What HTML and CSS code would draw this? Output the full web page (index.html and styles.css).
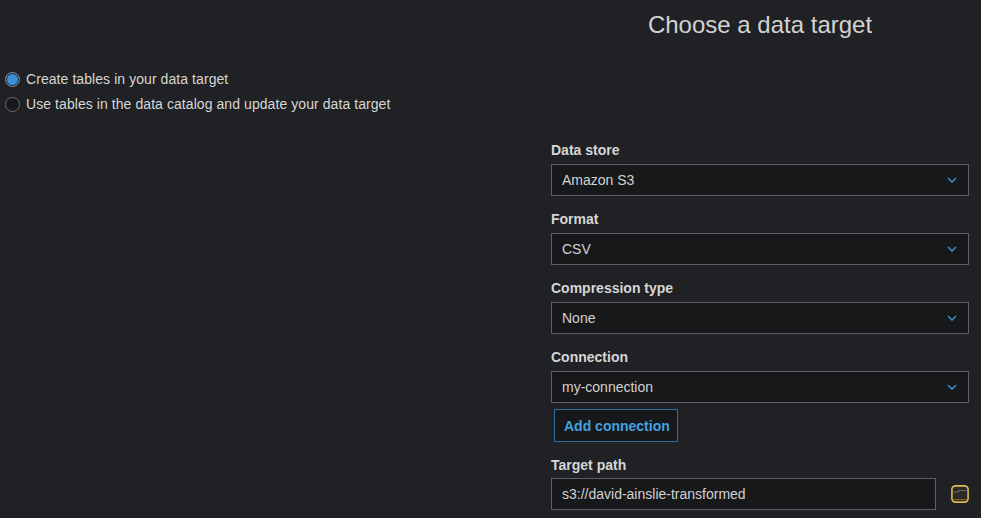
FILE: index.html
```html
<!DOCTYPE html>
<html>
<head>
<meta charset="utf-8">
<link rel="stylesheet" href="styles.css">
</head>
<body>
<div class="page">
  <div class="left">
    <label class="radio"><span class="dot checked"></span>Create tables in your data target</label>
    <label class="radio"><span class="dot"></span>Use tables in the data catalog and update your data target</label>
  </div>
  <div class="right">
    <h1 class="title">Choose a data target</h1>
    <div class="form">
      <div class="field">
        <div class="label">Data store</div>
        <div class="select"><span>Amazon S3</span><svg class="chev" width="10" height="6" viewBox="0 0 10 6"><path d="M1 1 L5 5 L9 1" fill="none" stroke="#3f8bc6" stroke-width="1.6"/></svg></div>
      </div>
      <div class="field">
        <div class="label">Format</div>
        <div class="select"><span>CSV</span><svg class="chev" width="10" height="6" viewBox="0 0 10 6"><path d="M1 1 L5 5 L9 1" fill="none" stroke="#3f8bc6" stroke-width="1.6"/></svg></div>
      </div>
      <div class="field">
        <div class="label">Compression type</div>
        <div class="select"><span>None</span><svg class="chev" width="10" height="6" viewBox="0 0 10 6"><path d="M1 1 L5 5 L9 1" fill="none" stroke="#3f8bc6" stroke-width="1.6"/></svg></div>
      </div>
      <div class="field field-conn">
        <div class="label">Connection</div>
        <div class="select"><span>my-connection</span><svg class="chev" width="10" height="6" viewBox="0 0 10 6"><path d="M1 1 L5 5 L9 1" fill="none" stroke="#3f8bc6" stroke-width="1.6"/></svg></div>
        <button class="btn">Add connection</button>
      </div>
      <div class="field">
        <div class="label label-tight">Target path</div>
        <div class="path-row">
          <div class="input">s3://david-ainslie-transformed</div>
          <svg class="folder" width="18" height="18" viewBox="0 0 18 18">
            <rect x="0.9" y="0.9" width="16.2" height="16.2" rx="3.5" fill="#2b2b2a" stroke="#e0b94f" stroke-width="1.6"/>
            <path d="M2 7 L7 7 L8.5 5.5 L16 5.5" fill="none" stroke="#6b6860" stroke-width="1.2"/>
            <path d="M2.5 14.5 L15.5 14.5" stroke="#8a6a22" stroke-width="1"/>
          </svg>
        </div>
      </div>
    </div>
  </div>
</div>
</body>
</html>
```
FILE: styles.css
```css
html, body {
  margin: 0;
  padding: 0;
  background: #1f2124;
  font-family: "Liberation Sans", Arial, sans-serif;
  color: #d4d4d4;
  font-size: 14px;
}
.page {
  display: flex;
  height: 518px;
  overflow: hidden;
}
.left {
  width: 551px;
  padding-top: 67px;
  box-sizing: border-box;
}
.radio {
  display: flex;
  align-items: center;
  height: 25px;
  line-height: 25px;
  padding-left: 5px;
  color: #d6d6d6;
  letter-spacing: 0.07px;
}
.dot {
  width: 13px;
  height: 13px;
  border-radius: 50%;
  border: 1px solid #6a6d71;
  background: #17181a;
  margin-right: 6px;
  box-sizing: content-box;
}
.dot.checked {
  background: #3b8fd4;
  box-shadow: inset 0 0 0 1px #1f2124;
  border-color: #7b8086;
}
.right {
  width: 418px;
}
.title {
  margin: 0;
  padding-top: 11px;
  font-size: 24px;
  line-height: 28px;
  font-weight: normal;
  text-align: center;
  color: #d3d3d3;
}
.form {
  margin-top: 102px;
}
.field {
  margin-bottom: 14px;
}
.field-conn {
  margin-bottom: 14px;
}
.label {
  font-weight: bold;
  line-height: 18px;
  margin-bottom: 5px;
  color: #d6d6d6;
}
.label-tight {
  margin-bottom: 4px;
}
.select, .input {
  height: 32px;
  box-sizing: border-box;
  border: 1px solid #5c6065;
  background: #17181a;
  padding: 0 11px 0 10px;
  line-height: 30px;
  color: #d2d2d2;
}
.select {
  display: flex;
  align-items: center;
  justify-content: space-between;
}
.chev {
  display: block;
}
.btn {
  display: block;
  margin: 6px 0 0 3px;
  height: 33px;
  width: 124px;
  padding: 0 9px;
  box-sizing: border-box;
  background: #17181a;
  border: 1px solid #2f6f9f;
  color: #44a1df;
  font-family: "Liberation Sans", Arial, sans-serif;
  font-size: 14px;
  font-weight: bold;
  text-align: left;
  white-space: nowrap;
}
.path-row {
  display: flex;
  align-items: center;
  gap: 15px;
}
.input {
  width: 385px;
}
.folder {
  display: block;
}
```
